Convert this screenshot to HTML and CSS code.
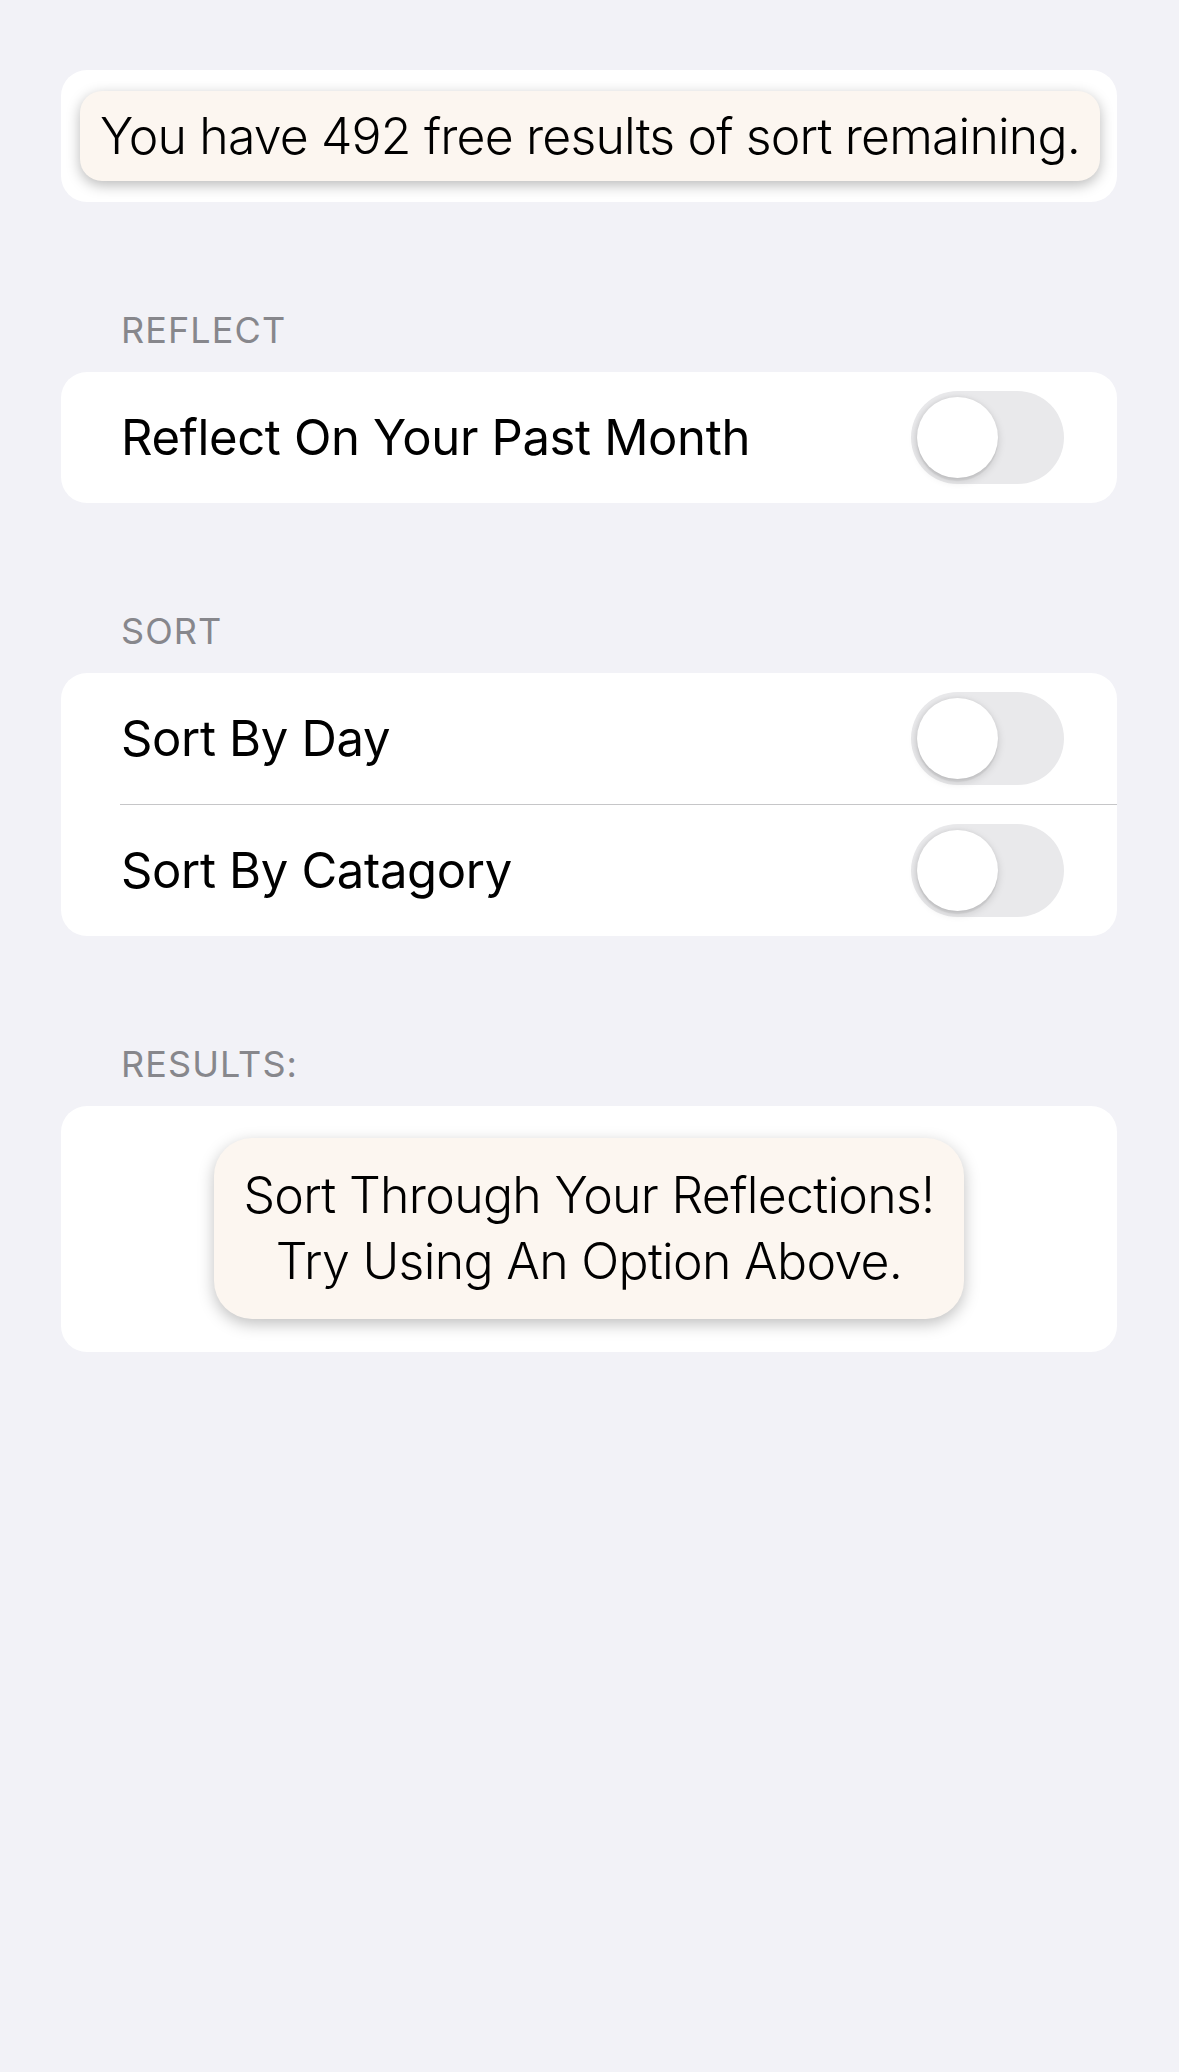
FILE: index.html
```html
<!DOCTYPE html>
<html lang="en">
<head>
<meta charset="utf-8">
<title>Sort</title>
<link rel="stylesheet" href="styles.css">
</head>
<body>
<main class="page">
  <section class="card card-banner">
    <div class="pill pill-banner">You have 492 free results of sort remaining.</div>
  </section>

  <section class="group">
    <h2 class="group-header">REFLECT</h2>
    <div class="card">
      <div class="row">
        <span class="row-label">Reflect On Your Past Month</span>
        <span class="toggle"><span class="knob"></span></span>
      </div>
    </div>
  </section>

  <section class="group">
    <h2 class="group-header">SORT</h2>
    <div class="card">
      <div class="row">
        <span class="row-label">Sort By Day</span>
        <span class="toggle"><span class="knob"></span></span>
      </div>
      <div class="separator"></div>
      <div class="row">
        <span class="row-label">Sort By Catagory</span>
        <span class="toggle"><span class="knob"></span></span>
      </div>
    </div>
  </section>

  <section class="group">
    <h2 class="group-header">RESULTS:</h2>
    <div class="card card-results">
      <div class="pill pill-results">Sort Through Your Reflections!<br>Try Using An Option Above.</div>
    </div>
  </section>
</main>
</body>
</html>
```

FILE: styles.css
```css
* { box-sizing: border-box; }

html, body {
  margin: 0;
  padding: 0;
  background: #f2f2f7;
}

body {
  font-family: Inter, "Noto Sans", "Liberation Sans", sans-serif;
  color: #000;
  min-height: 2072px;
}

.page {
  padding: 70px 62px 0 61px;
  display: flex;
  flex-direction: column;
}

.card {
  background: #ffffff;
  border-radius: 26px;
}

.card-banner {
  padding: 21px 17px 21px 19px;
}

.pill {
  background: #fcf6f0;
  color: #000;
  font-weight: 300;
  text-align: center;
}

.pill-banner {
  height: 90px;
  border-radius: 22px;
  display: flex;
  align-items: center;
  justify-content: center;
  font-size: 50px;
  letter-spacing: -0.85px;
  white-space: nowrap;
  box-shadow: 0 4px 14px rgba(0, 0, 0, 0.28);
}

.group {
  margin-top: 106px;
}

.group-header {
  margin: 0 0 20px 0;
  padding-left: 60px;
  font-size: 36px;
  line-height: 44px;
  font-weight: 400;
  color: #87878c;
  letter-spacing: 1.1px;
}

.row {
  height: 131px;
  display: flex;
  align-items: center;
  justify-content: space-between;
  padding: 0 53px 0 60px;
}

.row-label {
  font-size: 49px;
  font-weight: 400;
  letter-spacing: -0.35px;
}

.separator {
  height: 1px;
  margin-left: 59px;
  background: #c6c6c8;
}

.toggle {
  width: 153px;
  height: 93px;
  border-radius: 47px;
  background: #e9e9eb;
  display: flex;
  align-items: center;
  padding-left: 6px;
}

.knob {
  width: 81px;
  height: 81px;
  border-radius: 50%;
  background: #ffffff;
  box-shadow: 0 3px 8px rgba(0, 0, 0, 0.15), 0 3px 1px rgba(0, 0, 0, 0.05), -1px 0 4px rgba(0, 0, 0, 0.06);
}

.card-results {
  padding: 32px 0 33px;
  display: flex;
  justify-content: center;
}

.pill-results {
  width: 750px;
  padding: 24px 0 25px;
  border-radius: 38px;
  font-size: 50px;
  line-height: 66px;
  letter-spacing: -0.7px;
  box-shadow: 0 5px 16px rgba(0, 0, 0, 0.25);
}
```
